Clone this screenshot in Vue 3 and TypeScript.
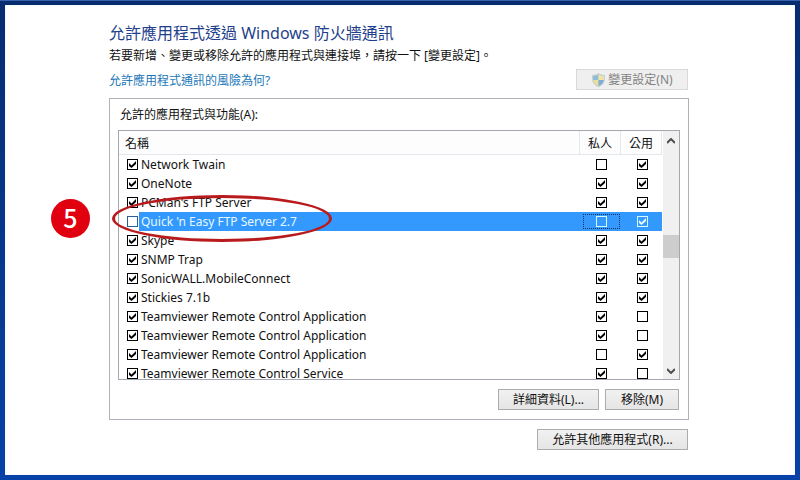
<script setup lang="ts">
import { ref } from 'vue'

interface AppRule {
  name: string
  allowed: boolean
  home: boolean
  open: boolean
  selected?: boolean
}

const rules = ref<AppRule[]>([
  { name: 'Network Twain', allowed: true, home: false, open: true },
  { name: 'OneNote', allowed: true, home: true, open: true },
  { name: "PCMan's FTP Server", allowed: true, home: true, open: true },
  { name: "Quick 'n Easy FTP Server 2.7", allowed: false, home: false, open: true, selected: true },
  { name: 'Skype', allowed: true, home: true, open: true },
  { name: 'SNMP Trap', allowed: true, home: true, open: true },
  { name: 'SonicWALL.MobileConnect', allowed: true, home: true, open: true },
  { name: 'Stickies 7.1b', allowed: true, home: true, open: true },
  { name: 'Teamviewer Remote Control Application', allowed: true, home: true, open: false },
  { name: 'Teamviewer Remote Control Application', allowed: true, home: true, open: false },
  { name: 'Teamviewer Remote Control Application', allowed: true, home: false, open: true },
  { name: 'Teamviewer Remote Control Service', allowed: true, home: true, open: false },
])
</script>

<template>
  <main class="window" lang="zh-Hant">
    <h1>允許應用程式透過 Windows 防火牆通訊</h1>
    <p class="intro">若要新增、變更或移除允許的應用程式與連接埠，請按一下 [變更設定]。</p>
    <div class="toolbar">
      <a href="#risks">允許應用程式通訊的風險為何?</a>
      <button class="btn change" type="button" disabled>
        <svg class="shield" viewBox="0 0 16 16" aria-hidden="true">
          <path d="M8 .5C6 2 3.500 2.600 1.200 2.600V7c0 4 2.800 7 6.800 8.700C12 14 14.800 11 14.800 7V2.600C12.500 2.600 10 2 8 .5Z" fill="#c3ccd2" />
          <path d="M8 2C6.300 3.100 4.300 3.700 2.400 3.800V8H8Z" fill="#8dbcd6" />
          <path d="M8 2c1.700 1.100 3.700 1.700 5.600 1.800V8H8Z" fill="#efe6a4" />
          <path d="M2.400 8H8v6.500C4.700 13 2.600 10.800 2.400 8Z" fill="#ebdf98" />
          <path d="M13.600 8H8v6.500C11.300 13 13.400 10.800 13.600 8Z" fill="#7fadd4" />
        </svg>
        <span>變更設定(N)</span>
      </button>
    </div>

    <section class="panel">
      <h2 id="list-label">允許的應用程式與功能(A):</h2>
      <div class="list">
        <div class="viewport">
          <table aria-labelledby="list-label">
            <thead>
              <tr>
                <th class="name" scope="col">名稱</th>
                <th class="flag" scope="col">私人</th>
                <th class="flag" scope="col">公用</th>
              </tr>
            </thead>
            <tbody>
              <tr v-for="(rule, i) in rules" :key="i" :class="{ selected: rule.selected }">
                <td>
                  <label class="entry">
                    <input v-model="rule.allowed" type="checkbox" />
                    <span class="title">{{ rule.name }}</span>
                  </label>
                </td>
                <td class="flag">
                  <label class="tick" :class="{ focused: rule.selected }">
                    <input v-model="rule.home" type="checkbox" :aria-label="`${rule.name} 私人`" />
                  </label>
                </td>
                <td class="flag">
                  <label class="tick">
                    <input v-model="rule.open" type="checkbox" :aria-label="`${rule.name} 公用`" />
                  </label>
                </td>
              </tr>
            </tbody>
          </table>
        </div>
        <div class="scrollbar" aria-hidden="true">
          <svg viewBox="0 0 8 6"><path d="M0 5 4 1 8 5" /></svg>
          <div class="track"><div class="thumb"></div></div>
          <svg viewBox="0 0 8 6"><path d="M0 1 4 5 8 1" /></svg>
        </div>
      </div>
      <div class="actions">
        <button class="btn details" type="button">詳細資料(L)...</button>
        <button class="btn remove" type="button">移除(M)</button>
      </div>
      <div class="ring"></div>
      <div class="step">5</div>
    </section>

    <div class="footer">
      <button class="btn other" type="button">允許其他應用程式(R)...</button>
    </div>
  </main>
</template>

<style>
body {
  background: #fff;
}
</style>

<style scoped>
.window {
  box-sizing: border-box;
  min-height: 100vh;
  padding: 16px 106px 20px 104px;
  border: 5px solid #0640a4;
  border-image: linear-gradient(#3a62a8 1px, #062c70 1px, #0742a8) 5;
  background: #fff;
  box-shadow: inset 0 0 1px #9cc4e8;
  color: #111;
  font-family: "Noto Sans", "Noto Sans CJK TC", sans-serif;
  font-size: 12px;
}
h1 {
  margin: 0;
  color: #1f3f8c;
  font-size: 16px;
  font-weight: 400;
  line-height: 24px;
}
.intro {
  margin: 0;
  line-height: 22px;
}
.toolbar {
  display: flex;
  align-items: center;
  justify-content: space-between;
  margin: 2px 1px 8px 0;
}
a {
  color: #1c78b8;
  text-decoration: none;
}
.btn {
  display: flex;
  align-items: center;
  justify-content: center;
  gap: 2px;
  box-sizing: border-box;
  height: 21px;
  padding: 0;
  border: 1px solid #acacac;
  background: linear-gradient(#f1f1f1, #e5e5e5);
  color: #111;
  font: inherit;
  line-height: 19px;
}
.change {
  width: 112px;
  border-color: #d9d9d9;
  background: #efefef;
  color: #838383;
}
.shield {
  width: 15px;
  height: 16px;
}
.details {
  width: 101px;
}
.remove {
  width: 74px;
}
.other {
  width: 151px;
}
.panel {
  position: relative;
  padding: 6px 8px 9px;
  border: 1px solid #b1b1b9;
}
h2 {
  margin: 0 0 5px 2px;
  font-size: 12px;
  font-weight: 400;
  line-height: 20px;
}
.list {
  display: flex;
  height: 248px;
  border: 1px solid #a4a6b2;
  overflow: hidden;
}
.viewport {
  flex: 1;
  padding-right: 1px;
  overflow: hidden;
}
table {
  width: 100%;
  table-layout: fixed;
  border-collapse: separate;
  border-spacing: 0;
}
th {
  box-sizing: border-box;
  height: 24px;
  padding: 0;
  border-right: 1px solid #e3e8ee;
  border-bottom: 1px solid #e3e8ee;
  background: #fdfdfe;
  font-weight: 400;
}
th.name {
  padding-left: 6px;
  text-align: left;
}
.flag {
  width: 41px;
}
td {
  height: 19px;
  padding: 0;
}
.entry {
  display: flex;
  align-items: center;
  padding-left: 8px;
}
.title {
  flex: 1;
  margin-left: 1px;
  padding-left: 2px;
  line-height: 19px;
  white-space: nowrap;
}
.selected .title,
.selected .flag {
  background: #3399ff;
  color: #e6f8ff;
}
.tick {
  display: flex;
  align-items: center;
  justify-content: center;
  box-sizing: border-box;
  height: 15px;
  margin: 0 1px 0 3px;
}
.focused {
  border: 1px dotted #14305a;
}
input {
  display: grid;
  place-content: center;
  box-sizing: border-box;
  width: 11px;
  height: 11px;
  margin: 0;
  border: 1px solid #000;
  background: #fff;
  appearance: none;
}
input:checked::before {
  content: "";
  width: 7px;
  height: 7px;
  background: #000;
  clip-path: polygon(0 29%, 36% 64%, 100% 0, 100% 43%, 36% 100%, 0 72%);
}
.selected .entry input {
  border-color: #2a5f96;
}
.selected .flag input {
  border-color: #d8fbff;
  background: transparent;
}
.selected .flag input::before {
  background: #e4fbff;
}
.scrollbar {
  display: flex;
  flex-direction: column;
  align-items: center;
  width: 16px;
  padding: 7px 0 5px;
  background: #f0f0f0;
}
.scrollbar svg {
  width: 8px;
  height: 6px;
  fill: none;
  stroke: #505050;
  stroke-width: 2;
}
.track {
  flex: 1;
  width: 100%;
  padding-top: 91px;
}
.thumb {
  height: 23px;
  background: #cdcdcd;
}
.actions {
  display: flex;
  justify-content: flex-end;
  gap: 6px;
  margin: 9px 1px 0 0;
}
.footer {
  display: flex;
  justify-content: flex-end;
  margin: 9px 1px 0 0;
}
.ring {
  position: absolute;
  top: 96px;
  left: 2px;
  box-sizing: border-box;
  width: 220px;
  height: 47px;
  border: 3px solid #b91a1c;
  border-radius: 50%;
  pointer-events: none;
}
.step {
  position: absolute;
  top: 100px;
  left: -59px;
  width: 39px;
  height: 39px;
  border-radius: 50%;
  background: #e00010;
  color: #fff;
  font-family: "Noto Sans CJK TC", sans-serif;
  font-size: 25px;
  font-weight: 500;
  line-height: 36px;
  text-align: center;
}
</style>
